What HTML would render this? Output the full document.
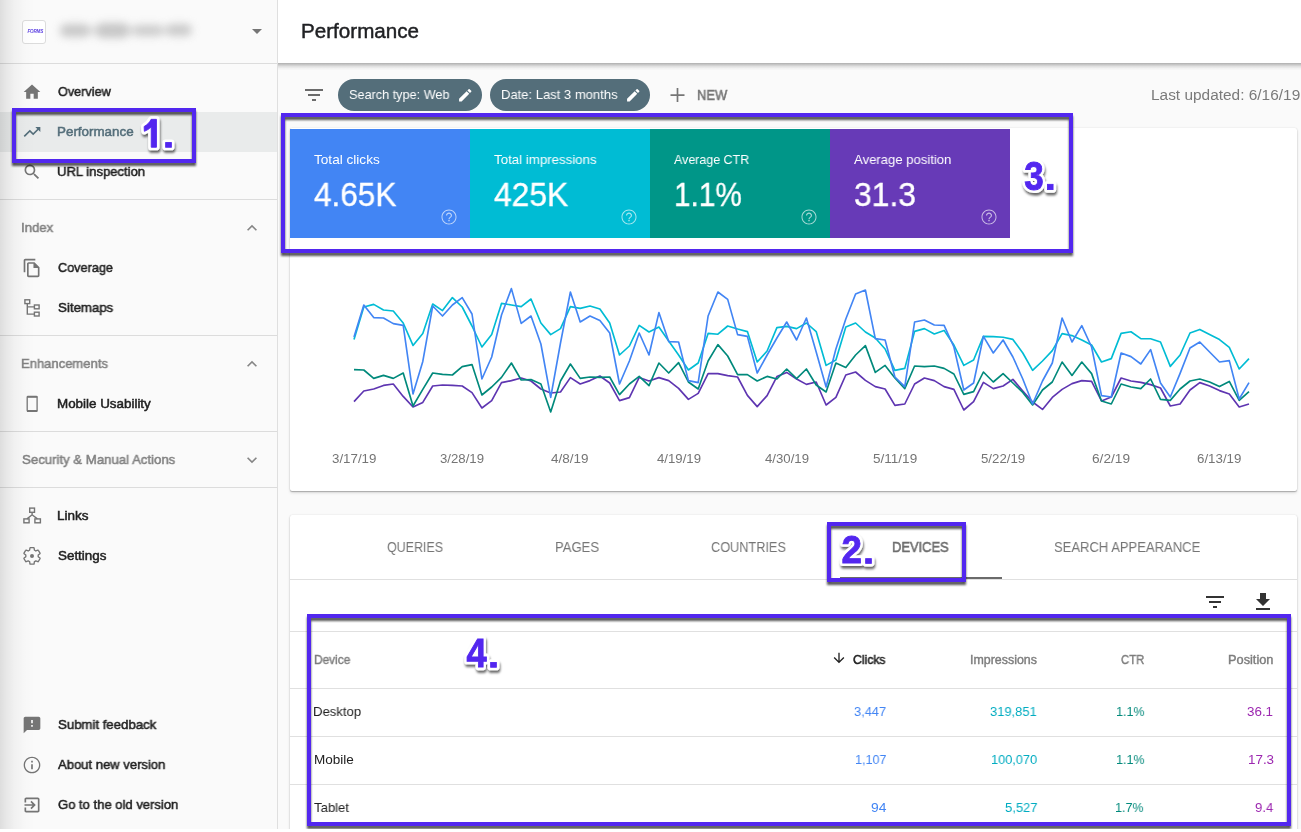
<!DOCTYPE html>
<html lang="en">
<head>
<meta charset="utf-8">
<title>Performance</title>
<style>
*{box-sizing:border-box;margin:0;padding:0}
html,body{width:1301px;height:832px;overflow:hidden;background:#fff}
body{font-family:"Liberation Sans",sans-serif;color:#212121;position:relative}
.abs{position:absolute}
#app{position:absolute;left:0;top:0;width:1301px;height:829px;background:#fafafa;overflow:hidden}
/* ---------- sidebar ---------- */
#side{position:absolute;left:0;top:0;width:278px;height:829px;background:#fafafa;border-right:1px solid #dfdfdf}
#side .edge{position:absolute;left:0;top:0;width:36px;height:829px;background:linear-gradient(to right,rgba(0,0,0,.115) 0,rgba(0,0,0,.07) 7px,rgba(0,0,0,.035) 15px,rgba(0,0,0,.012) 25px,rgba(0,0,0,0) 35px)}
.hr{position:absolute;left:0;width:277px;height:1px;background:#dcdcdc}
.nav{position:absolute;left:0;width:277px;height:40px}
.nav.sel{background:#e9ebeb}
.nav svg{position:absolute;left:22px;top:10px;width:20px;height:20px;fill:#757575}
.nav.sel svg{fill:#546e7a}
.chev{position:absolute;left:242px;width:20px;height:20px;fill:#858585}
/* ---------- header ---------- */
#head{position:absolute;left:278px;top:0;width:1023px;height:63px;background:#fff}
#head:after{content:"";position:absolute;left:0;top:63px;width:1023px;height:8px;background:linear-gradient(to bottom,rgba(0,0,0,.30) 0,rgba(0,0,0,.21) 1.5px,rgba(0,0,0,.10) 3.5px,rgba(0,0,0,.03) 5.5px,rgba(0,0,0,0) 7.5px)}
/* ---------- filter bar ---------- */
.chip{position:absolute;top:79px;height:32px;border-radius:16px;background:#546e7a;color:#fff;font-size:13px;line-height:32px;white-space:nowrap}
.chip svg{position:absolute;top:8px;width:16px;height:16px;fill:#fff}
/* ---------- cards ---------- */
.card{position:absolute;left:290px;width:1007px;background:#fff;border-radius:2px;box-shadow:0 1px 1px rgba(0,0,0,.22),0 2px 3px rgba(0,0,0,.12),0 0 1.5px rgba(0,0,0,.15)}
.tile{position:absolute;top:1px;width:180px;height:109px;color:#fff}
.tile svg{position:absolute;left:150px;top:79px;width:18px;height:18px;fill:rgba(255,255,255,.66)}
.t{position:absolute;will-change:transform;line-height:0;white-space:nowrap;transform-origin:0 0;color:#212121}
.line{position:absolute;left:290px;width:1007px;height:1px;background:#e0e0e0}
/* ---------- annotations ---------- */
.box{position:absolute;border:4px solid #5227ef;filter:drop-shadow(.6px 3px .9px rgba(0,0,0,.66))}
.num{position:absolute;overflow:visible}
.num text{font-family:"Liberation Sans",sans-serif;font-weight:bold;font-size:40px}
</style>
</head>
<body>
<div id="app">

<!-- ================= SIDEBAR ================= -->
<div id="side">
  <div class="abs" style="left:22px;top:20px;width:24px;height:24px;border:1px solid #dcdcdc;border-radius:3px;background:#fff"></div>
  <div class="abs" style="left:27.500px;top:29px;width:14px;height:6px;line-height:6px;font-size:4.600px;font-weight:bold;font-style:italic;color:#6146e3;letter-spacing:-.2px;white-space:nowrap;filter:blur(.3px)">FORMS</div>
  <div class="abs" style="left:46px;top:10px;width:160px;height:42px;filter:blur(4.500px);opacity:.8">
    <div class="abs" style="left:14px;top:14px;width:30px;height:13px;background:#bcbcbc;border-radius:6px"></div>
    <div class="abs" style="left:44px;top:17px;width:8px;height:7px;background:#d8d8d8"></div>
    <div class="abs" style="left:50px;top:13px;width:33px;height:15px;background:#bababa;border-radius:6px"></div>
    <div class="abs" style="left:83px;top:17px;width:6px;height:7px;background:#d6d6d6"></div>
    <div class="abs" style="left:87px;top:15px;width:30px;height:11px;background:#c0c0c0;border-radius:5px"></div>
    <div class="abs" style="left:117px;top:17px;width:5px;height:7px;background:#d8d8d8"></div>
    <div class="abs" style="left:120px;top:14px;width:26px;height:12px;background:#bebebe;border-radius:6px"></div>
  </div>
  <svg class="abs" style="left:252px;top:29px;width:10px;height:5px" viewBox="0 0 10 5"><path d="M0 0h10L5 5z" fill="#757575"/></svg>
  <div class="hr" style="top:63px"></div>

  <div class="nav" style="top:72px"><svg viewBox="0 0 24 24"><path d="M10 20v-6h4v6h5v-8h3L12 3 2 12h3v8z"/></svg></div>
  <div class="nav sel" style="top:112px"><svg viewBox="0 0 24 24"><path d="M16 6l2.290 2.290-4.880 4.880-4-4L2 16.590 3.410 18l6-6 4 4 6.300-6.290L22 12V6z"/></svg></div>
  <div class="nav" style="top:152px"><svg viewBox="0 0 24 24"><path d="M15.500 14h-.79l-.28-.27A6.470 6.470 0 0 0 16 9.500 6.500 6.500 0 1 0 9.500 16c1.610 0 3.090-.59 4.230-1.570l.27.28v.79l5 4.990L20.490 19l-4.990-5zm-6 0C7.010 14 5 11.990 5 9.500S7.010 5 9.500 5 14 7.010 14 9.500 11.990 14 9.500 14z"/></svg></div>
  <div class="hr" style="top:199px"></div>

  <svg class="chev" style="top:218px" viewBox="0 0 24 24"><path d="M7.410 15.410L12 10.830l4.590 4.580L18 14l-6-6-6 6z"/></svg>
  <div class="nav" style="top:248px"><svg viewBox="0 0 24 24"><path d="M16 1H4c-1.100 0-2 .9-2 2v14h2V3h12V1zm-1 4H8c-1.100 0-1.990.9-1.990 2L6 21c0 1.100.89 2 1.990 2H19c1.100 0 2-.9 2-2V11l-6-6zM8 21V7h6v5h5v9H8z"/><path d="M14 6.500l5.500 5.500H14z"/></svg></div>
  <div class="hr" style="top:335px"></div>

  <svg class="chev" style="top:354px" viewBox="0 0 24 24"><path d="M7.410 15.410L12 10.830l4.590 4.580L18 14l-6-6-6 6z"/></svg>
  <div class="hr" style="top:431px"></div>

  <svg class="chev" style="top:450px" viewBox="0 0 24 24"><path d="M7.410 8.590L12 13.170l4.590-4.580L18 10l-6 6-6-6z"/></svg>
  <div class="hr" style="top:487px"></div>

  <div class="nav" style="top:705px"><svg viewBox="0 0 24 24"><path d="M20 2H4c-1.100 0-1.990.9-1.990 2L2 22l4-4h14c1.100 0 2-.9 2-2V4c0-1.100-.9-2-2-2zm-7 12h-2v-2h2v2zm0-4h-2V6h2v4z"/></svg></div>
  <div class="nav" style="top:745px"><svg viewBox="0 0 24 24"><path d="M11 17h2v-6h-2v6zm1-15C6.480 2 2 6.480 2 12s4.480 10 10 10 10-4.480 10-10S17.520 2 12 2zm0 18.400c-4.630 0-8.400-3.770-8.400-8.400S7.370 3.600 12 3.600s8.400 3.770 8.400 8.400-3.770 8.400-8.400 8.400zM11 9h2V7h-2v2z"/></svg></div>
  <div class="nav" style="top:785px"><svg viewBox="0 0 24 24"><path d="M10.090 15.590L11.500 17l5-5-5-5-1.410 1.410L12.670 11H3v2h9.670l-2.580 2.590zM19 3H5c-1.110 0-2 .9-2 2v4h2V5h14v14H5v-4H3v4c0 1.100.89 2 2 2h14c1.100 0 2-.9 2-2V5c0-1.100-.9-2-2-2z"/></svg></div>

  <!-- custom outlined icons (page pixel coordinates) -->
  <svg class="abs" style="left:0;top:0;width:60px;height:829px" viewBox="0 0 60 829" fill="none" stroke="#757575" stroke-width="1.400">
    <!-- sitemaps -->
    <rect x="24.900" y="299.800" width="4.800" height="3.800"/>
    <rect x="34.400" y="305" width="4.700" height="3.800"/>
    <rect x="34.400" y="312.200" width="4.700" height="3.800"/>
    <path d="M27.300 303.600V314.100H34.400M27.300 306.900H34.400"/>
    <!-- mobile -->
    <rect x="27.200" y="396.500" width="9.900" height="14.800" rx=".8" stroke-width="1.300"/>
    <path d="M27 396.900H37.300M27 411H37.300" stroke-width="1.900"/>
    <!-- links -->
    <rect x="29.700" y="508.100" width="4.800" height="4.200"/>
    <rect x="23.900" y="518.900" width="5.200" height="3.900"/>
    <rect x="34.900" y="518.900" width="5.500" height="3.900"/>
    <path d="M32.100 512.300V515.200M27 518.900L32.100 514.800L37.400 518.900"/>
    <!-- settings gear -->
    <g transform="translate(22.050,545.950) scale(.83)"><path stroke-width="1.600" stroke-linejoin="round" d="M19.430 12.980c.04-.32.07-.64.07-.98s-.03-.66-.07-.98l2.110-1.650c.19-.15.24-.42.12-.64l-2-3.460c-.12-.22-.39-.3-.61-.22l-2.490 1c-.52-.4-1.080-.73-1.690-.98l-.38-2.650C14.460 2.180 14.250 2 14 2h-4c-.25 0-.46.18-.49.42l-.38 2.650c-.61.25-1.170.59-1.690.98l-2.490-1c-.23-.09-.49 0-.61.220l-2 3.460c-.13.220-.07.490.12.640l2.110 1.650c-.04.320-.07.650-.07.980s.03.660.07.980l-2.110 1.650c-.19.150-.24.420-.12.640l2 3.460c.12.220.39.300.61.220l2.490-1c.52.400 1.080.73 1.690.98l.38 2.650c.03.240.24.420.49.420h4c.25 0 .46-.18.490-.42l.38-2.650c.61-.25 1.170-.59 1.690-.98l2.490 1c.23.090.49 0 .61-.22l2-3.460c.12-.22.070-.49-.12-.64l-2.110-1.650z"/><circle cx="12" cy="12" r="2.400" fill="#757575" stroke="none"/></g>
  </svg>
  <div class="edge"></div>
</div>
<span class="t" style="left:58px;top:92px;font-size:13.4px;-webkit-text-stroke:.5px;transform:scaleX(0.9440)">Overview</span>
<span class="t" style="left:57px;top:132px;font-size:13.4px;-webkit-text-stroke:.5px;color:#546e7a;transform:scaleX(0.9956)">Performance</span>
<span class="t" style="left:57px;top:172px;font-size:13.4px;-webkit-text-stroke:.5px;transform:scaleX(0.9751)">URL inspection</span>
<span class="t" style="left:21px;top:228px;font-size:13.4px;-webkit-text-stroke:.5px;color:#808080;transform:scaleX(0.9832)">Index</span>
<span class="t" style="left:58px;top:268px;font-size:13.4px;-webkit-text-stroke:.5px;transform:scaleX(0.9471)">Coverage</span>
<span class="t" style="left:58px;top:308px;font-size:13.4px;-webkit-text-stroke:.5px;transform:scaleX(0.9894)">Sitemaps</span>
<span class="t" style="left:21px;top:364px;font-size:13.4px;-webkit-text-stroke:.5px;color:#808080;transform:scaleX(0.9725)">Enhancements</span>
<span class="t" style="left:57px;top:404px;font-size:13.4px;-webkit-text-stroke:.5px;transform:scaleX(0.9968)">Mobile Usability</span>
<span class="t" style="left:22px;top:460px;font-size:13.4px;-webkit-text-stroke:.5px;color:#808080;transform:scaleX(0.9854)">Security &amp; Manual Actions</span>
<span class="t" style="left:57px;top:516px;font-size:13.4px;-webkit-text-stroke:.5px;transform:scaleX(1.0089)">Links</span>
<span class="t" style="left:58px;top:556px;font-size:13.4px;-webkit-text-stroke:.5px;transform:scaleX(1.0009)">Settings</span>
<span class="t" style="left:58px;top:725px;font-size:13.4px;-webkit-text-stroke:.5px;transform:scaleX(0.9850)">Submit feedback</span>
<span class="t" style="left:58px;top:765px;font-size:13.4px;-webkit-text-stroke:.5px;transform:scaleX(0.9742)">About new version</span>
<span class="t" style="left:58px;top:805px;font-size:13.4px;-webkit-text-stroke:.5px;transform:scaleX(0.9736)">Go to the old version</span>

<!-- ================= HEADER ================= -->
<div id="head"></div>
<span class="t" style="left:301px;top:31px;font-size:20.5px;-webkit-text-stroke:.45px;color:#202124;transform:scaleX(1.0060)">Performance</span>

<!-- ================= FILTER BAR ================= -->
<svg class="abs" style="left:302px;top:83px;width:24px;height:24px" viewBox="0 0 24 24"><path d="M10 18h4v-2h-4v2zM3 6v2h18V6H3zm3 7h12v-2H6v2z" fill="#6b6b6b"/></svg>
<div class="chip" style="left:338px;width:144px"><svg style="left:118.900px;top:7.800px;width:16.500px;height:16.500px" viewBox="0 0 24 24"><path d="M3 17.250V21h3.750L17.810 9.940l-3.750-3.750L3 17.250zM20.710 7.040c.39-.39.39-1.020 0-1.410l-2.340-2.340c-.39-.39-1.020-.39-1.410 0l-1.830 1.830 3.750 3.750 1.830-1.830z"/></svg></div>
<div class="chip" style="left:490px;width:160px"><svg style="left:134.800px;top:7.900px;width:16.500px;height:16.500px" viewBox="0 0 24 24"><path d="M3 17.250V21h3.750L17.810 9.940l-3.750-3.750L3 17.250zM20.710 7.040c.39-.39.39-1.020 0-1.410l-2.340-2.340c-.39-.39-1.020-.39-1.410 0l-1.830 1.830 3.750 3.750 1.830-1.830z"/></svg></div>
<span class="t" style="left:349px;top:95px;font-size:13.4px;color:#fff;transform:scaleX(0.9464)">Search type: Web</span>
<span class="t" style="left:501px;top:95px;font-size:13.4px;color:#fff;transform:scaleX(0.9724)">Date: Last 3 months</span>
<svg class="abs" style="left:668px;top:86px;width:20px;height:20px" viewBox="0 0 20 20"><path d="M2.500 9.100H16.500M9.500 2V16" stroke="#757575" stroke-width="1.700" fill="none"/></svg>
<span class="t" style="left:697px;top:95px;font-size:13.9px;-webkit-text-stroke:.5px;color:#757575;transform:scaleX(0.9338)">NEW</span>
<span class="t" style="left:1151px;top:95px;font-size:14.7px;color:#7a7a7a;transform:scaleX(1.0501)">Last updated: 6/16/19</span>

<!-- ================= CHART CARD ================= -->
<div class="card" style="top:128px;height:363px">
  <div class="tile" style="left:0;background:#4285f4"><svg viewBox="0 0 24 24"><path d="M11.100 17.800h1.800v-1.800h-1.800v1.800zM12 2C6.480 2 2 6.480 2 12s4.480 10 10 10 10-4.480 10-10S17.520 2 12 2zm0 18.700c-4.800 0-8.700-3.900-8.700-8.700S7.200 3.300 12 3.300s8.700 3.900 8.700 8.700-3.900 8.700-8.700 8.700zm0-14.700c-2.210 0-4 1.790-4 4h1.500c0-1.380 1.120-2.500 2.500-2.500s2.500 1.120 2.500 2.500c0 2-3.250 2.250-3.250 5h1.500c0-2.250 3.250-2.500 3.250-5 0-2.210-1.790-4-4-4z"/></svg></div>
  <div class="tile" style="left:180px;background:#00bcd4"><svg viewBox="0 0 24 24"><path d="M11.100 17.800h1.800v-1.800h-1.800v1.800zM12 2C6.480 2 2 6.480 2 12s4.480 10 10 10 10-4.480 10-10S17.520 2 12 2zm0 18.700c-4.800 0-8.700-3.900-8.700-8.700S7.200 3.300 12 3.300s8.700 3.900 8.700 8.700-3.900 8.700-8.700 8.700zm0-14.700c-2.210 0-4 1.790-4 4h1.500c0-1.380 1.120-2.500 2.500-2.500s2.500 1.120 2.500 2.500c0 2-3.250 2.250-3.250 5h1.500c0-2.250 3.250-2.500 3.250-5 0-2.210-1.790-4-4-4z"/></svg></div>
  <div class="tile" style="left:360px;background:#009688"><svg viewBox="0 0 24 24"><path d="M11.100 17.800h1.800v-1.800h-1.800v1.800zM12 2C6.480 2 2 6.480 2 12s4.480 10 10 10 10-4.480 10-10S17.520 2 12 2zm0 18.700c-4.800 0-8.700-3.900-8.700-8.700S7.200 3.300 12 3.300s8.700 3.900 8.700 8.700-3.900 8.700-8.700 8.700zm0-14.700c-2.210 0-4 1.790-4 4h1.500c0-1.380 1.120-2.500 2.500-2.500s2.500 1.120 2.500 2.500c0 2-3.250 2.250-3.250 5h1.500c0-2.250 3.250-2.500 3.250-5 0-2.210-1.790-4-4-4z"/></svg></div>
  <div class="tile" style="left:540px;background:#673ab7"><svg viewBox="0 0 24 24"><path d="M11.100 17.800h1.800v-1.800h-1.800v1.800zM12 2C6.480 2 2 6.480 2 12s4.480 10 10 10 10-4.480 10-10S17.520 2 12 2zm0 18.700c-4.800 0-8.700-3.900-8.700-8.700S7.200 3.300 12 3.300s8.700 3.900 8.700 8.700-3.900 8.700-8.700 8.700zm0-14.700c-2.210 0-4 1.790-4 4h1.500c0-1.380 1.120-2.500 2.500-2.500s2.500 1.120 2.500 2.500c0 2-3.250 2.250-3.250 5h1.500c0-2.250 3.250-2.500 3.250-5 0-2.210-1.790-4-4-4z"/></svg></div>
</div>
<span class="t" style="left:314px;top:160px;font-size:13.4px;color:#fff;transform:scaleX(1.0155)">Total clicks</span>
<span class="t" style="left:494px;top:160px;font-size:13.4px;color:#fff;transform:scaleX(0.9923)">Total impressions</span>
<span class="t" style="left:674px;top:160px;font-size:13.4px;color:#fff;transform:scaleX(0.9298)">Average CTR</span>
<span class="t" style="left:854px;top:160px;font-size:13.4px;color:#fff;transform:scaleX(0.9790)">Average position</span>
<span class="t" style="left:314px;top:195px;font-size:33px;-webkit-text-stroke:.35px;color:#fff;transform:scaleX(0.9557)">4.65K</span>
<span class="t" style="left:494px;top:195px;font-size:33px;-webkit-text-stroke:.35px;color:#fff;transform:scaleX(0.9634)">425K</span>
<span class="t" style="left:674px;top:195px;font-size:33px;-webkit-text-stroke:.35px;color:#fff;transform:scaleX(0.9031)">1.1%</span>
<span class="t" style="left:854px;top:195px;font-size:33px;-webkit-text-stroke:.35px;color:#fff;transform:scaleX(0.9668)">31.3</span>

<svg class="abs" style="left:0;top:0;width:1301px;height:500px;pointer-events:none" viewBox="0 0 1301 500" fill="none" stroke-width="1.650" stroke-linejoin="round" stroke-linecap="butt">
  <polyline stroke="#5e35b1" points="354.0,401.6 363.8,391.0 373.7,389.0 383.5,385.4 393.3,384.0 403.2,396.4 413.0,407.0 422.8,402.4 432.7,386.0 442.5,385.0 452.4,385.4 462.2,386.0 472.0,392.6 481.9,408.0 491.7,400.6 501.5,382.6 511.4,380.6 521.2,378.0 531.0,381.0 540.9,389.0 550.7,393.0 560.5,392.0 570.4,377.6 580.2,384.0 590.0,380.6 599.9,376.0 609.7,383.0 619.5,400.6 629.4,397.6 639.2,377.4 649.0,381.0 658.9,377.6 668.7,380.6 678.6,388.4 688.4,399.4 698.2,393.4 708.1,373.6 717.9,373.6 727.7,375.6 737.6,377.0 747.4,395.4 757.2,406.6 767.1,395.6 776.9,376.6 786.7,372.4 796.6,379.0 806.4,384.4 816.2,382.0 826.1,405.0 835.9,397.4 845.8,375.0 855.6,372.0 865.4,380.4 875.3,386.6 885.1,389.0 894.9,405.4 904.8,404.0 914.6,384.0 924.4,378.0 934.3,380.6 944.1,386.6 953.9,389.4 963.8,410.0 973.6,401.6 983.4,382.4 993.3,388.6 1003.1,386.0 1012.9,379.4 1022.8,391.0 1032.6,402.0 1042.5,409.4 1052.3,397.4 1062.1,389.4 1072.0,383.6 1081.8,380.6 1091.6,381.4 1101.5,401.0 1111.3,397.0 1121.1,378.0 1131.0,381.0 1140.8,382.4 1150.6,384.6 1160.5,388.0 1170.3,406.0 1180.1,404.0 1190.0,390.0 1199.8,382.6 1209.6,386.0 1219.5,390.6 1229.3,394.0 1239.2,407.0 1249.0,404.0"/>
  <polyline stroke="#00897b" points="354.0,369.6 363.8,370.0 373.7,378.4 383.5,375.4 393.3,378.4 403.2,373.0 413.0,406.0 422.8,389.4 432.7,373.0 442.5,374.4 452.4,375.0 462.2,366.6 472.0,364.6 481.9,395.0 491.7,387.0 501.5,377.4 511.4,363.0 521.2,380.0 531.0,379.6 540.9,384.0 550.7,412.0 560.5,381.0 570.4,364.0 580.2,378.4 590.0,377.0 599.9,377.4 609.7,377.0 619.5,394.6 629.4,384.0 639.2,376.4 649.0,385.6 658.9,363.0 668.7,373.0 678.6,362.6 688.4,382.0 698.2,389.0 708.1,361.0 717.9,344.6 727.7,356.0 737.6,374.6 747.4,374.6 757.2,381.0 767.1,376.4 776.9,379.0 786.7,369.0 796.6,378.6 806.4,369.0 816.2,385.0 826.1,392.0 835.9,363.0 845.8,367.4 855.6,355.0 865.4,345.6 875.3,372.4 885.1,365.4 894.9,378.0 904.8,388.6 914.6,366.0 924.4,366.6 934.3,366.0 944.1,368.4 953.9,374.0 963.8,394.4 973.6,391.6 983.4,372.0 993.3,382.0 1003.1,373.6 1012.9,383.0 1022.8,392.4 1032.6,405.0 1042.5,390.0 1052.3,382.0 1062.1,362.0 1072.0,375.4 1081.8,362.0 1091.6,373.6 1101.5,401.0 1111.3,404.0 1121.1,384.0 1131.0,387.0 1140.8,388.6 1150.6,379.0 1160.5,399.4 1170.3,400.4 1180.1,389.0 1190.0,381.0 1199.8,379.0 1209.6,382.0 1219.5,386.6 1229.3,381.4 1239.2,400.4 1249.0,391.6"/>
  <polyline stroke="#00bcd4" points="354.0,339.4 363.8,307.0 373.7,304.4 383.5,310.0 393.3,311.0 403.2,323.0 413.0,345.4 422.8,333.4 432.7,304.0 442.5,310.6 452.4,297.6 462.2,307.0 472.0,326.0 481.9,347.0 491.7,334.6 501.5,303.4 511.4,305.0 521.2,306.6 531.0,299.0 540.9,323.0 550.7,334.6 560.5,328.6 570.4,306.6 580.2,308.4 590.0,306.0 599.9,309.0 609.7,323.0 619.5,355.0 629.4,346.0 639.2,325.4 649.0,332.0 658.9,327.0 668.7,341.0 678.6,355.0 688.4,370.0 698.2,363.0 708.1,333.4 717.9,334.2 727.7,326.0 737.6,329.0 747.4,331.6 757.2,362.0 767.1,351.0 776.9,327.6 786.7,326.4 796.6,328.6 806.4,323.0 816.2,331.6 826.1,365.4 835.9,360.0 845.8,327.0 855.6,323.0 865.4,332.0 875.3,338.0 885.1,349.0 894.9,370.4 904.8,368.4 914.6,331.4 924.4,328.6 934.3,334.0 944.1,330.4 953.9,345.0 963.8,365.4 973.6,360.0 983.4,336.4 993.3,336.6 1003.1,337.2 1012.9,339.4 1022.8,353.0 1032.6,370.4 1042.5,361.0 1052.3,350.6 1062.1,333.6 1072.0,335.6 1081.8,340.0 1091.6,345.0 1101.5,362.0 1111.3,358.6 1121.1,333.4 1131.0,331.8 1140.8,338.6 1150.6,338.8 1160.5,342.0 1170.3,366.4 1180.1,355.0 1190.0,333.0 1199.8,329.4 1209.6,334.6 1219.5,339.6 1229.3,347.4 1239.2,369.0 1249.0,358.6"/>
  <polyline stroke="#4285f4" points="354.0,337.0 363.8,305.0 373.7,317.6 383.5,318.0 393.3,323.6 403.2,325.4 413.0,394.0 422.8,361.4 432.7,306.0 442.5,316.0 452.4,305.0 462.2,297.6 472.0,314.0 481.9,379.0 491.7,357.0 501.5,315.0 511.4,288.6 521.2,323.4 531.0,316.0 540.9,344.0 550.7,397.4 560.5,343.0 570.4,292.0 580.2,322.0 590.0,316.0 599.9,320.6 609.7,333.0 619.5,384.0 629.4,361.0 639.2,333.0 649.0,355.0 658.9,312.6 668.7,341.6 678.6,342.0 688.4,380.6 698.2,382.6 708.1,316.0 717.9,292.0 727.7,299.4 737.6,334.6 747.4,336.4 757.2,373.0 767.1,355.0 776.9,338.0 786.7,322.0 796.6,340.0 806.4,318.0 816.2,352.0 826.1,387.0 835.9,349.0 845.8,319.0 855.6,294.0 865.4,290.0 875.3,338.6 885.1,340.0 894.9,377.0 904.8,386.6 914.6,322.0 924.4,320.0 934.3,325.0 944.1,325.4 953.9,347.0 963.8,390.0 973.6,383.0 983.4,336.4 993.3,353.0 1003.1,340.0 1012.9,357.0 1022.8,379.0 1032.6,404.0 1042.5,381.0 1052.3,363.0 1062.1,318.0 1072.0,342.0 1081.8,325.6 1091.6,347.0 1101.5,395.6 1111.3,397.0 1121.1,353.0 1131.0,356.6 1140.8,364.0 1150.6,349.6 1160.5,383.0 1170.3,397.0 1180.1,373.4 1190.0,348.0 1199.8,342.0 1209.6,352.0 1219.5,362.0 1229.3,360.6 1239.2,399.0 1249.0,382.6"/>
</svg>
<span class="t" style="left:332px;top:459px;font-size:12.6px;color:#757575;transform:scaleX(1.0573)">3/17/19</span>
<span class="t" style="left:440px;top:459px;font-size:12.6px;color:#757575;transform:scaleX(1.0478)">3/28/19</span>
<span class="t" style="left:551px;top:459px;font-size:12.6px;color:#757575;transform:scaleX(1.0690)">4/8/19</span>
<span class="t" style="left:657px;top:459px;font-size:12.6px;color:#757575;transform:scaleX(1.0467)">4/19/19</span>
<span class="t" style="left:765px;top:459px;font-size:12.6px;color:#757575;transform:scaleX(1.0467)">4/30/19</span>
<span class="t" style="left:873px;top:459px;font-size:12.6px;color:#757575;transform:scaleX(1.0753)">5/11/19</span>
<span class="t" style="left:981px;top:459px;font-size:12.6px;color:#757575;transform:scaleX(1.0506)">5/22/19</span>
<span class="t" style="left:1092px;top:459px;font-size:12.6px;color:#757575;transform:scaleX(1.0858)">6/2/19</span>
<span class="t" style="left:1197px;top:459px;font-size:12.6px;color:#757575;transform:scaleX(1.0558)">6/13/19</span>

<!-- ================= TABLE CARD ================= -->
<div class="card" style="top:515px;height:330px"></div>
<span class="t" style="left:387px;top:547px;font-size:14.4px;color:#757575;transform:scaleX(0.8654)">QUERIES</span>
<span class="t" style="left:555px;top:547px;font-size:14.4px;color:#757575;transform:scaleX(0.9075)">PAGES</span>
<span class="t" style="left:711px;top:547px;font-size:14.4px;color:#757575;transform:scaleX(0.8840)">COUNTRIES</span>
<span class="t" style="left:892px;top:547px;font-size:14.4px;-webkit-text-stroke:.6px;color:#6e6e6e;transform:scaleX(0.8976)">DEVICES</span>
<span class="t" style="left:1054px;top:547px;font-size:14.4px;color:#757575;transform:scaleX(0.9053)">SEARCH APPEARANCE</span>
<div class="line" style="top:579px"></div>
<div class="abs" style="left:840px;top:577px;width:162px;height:2px;background:#6b6b6b"></div>
<svg class="abs" style="left:1203px;top:590px;width:24px;height:24px" viewBox="0 0 24 24"><path d="M10 18h4v-2h-4v2zM3 6v2h18V6H3zm3 7h12v-2H6v2z" fill="#333"/></svg>
<svg class="abs" style="left:1251px;top:590px;width:24px;height:24px" viewBox="0 0 24 24"><path d="M19 9h-4V3H9v6H5l7 7 7-7zM5 18v2h14v-2H5z" fill="#333"/></svg>
<div class="line" style="top:631px"></div>
<div class="line" style="top:688px"></div>
<div class="line" style="top:736px"></div>
<div class="line" style="top:784px"></div>

<span class="t" style="left:314px;top:660px;font-size:12.4px;-webkit-text-stroke:.4px;color:#7d7d7d;transform:scaleX(0.9590)">Device</span>
<svg class="abs" style="left:831px;top:650px;width:16px;height:16px" viewBox="0 0 24 24"><path d="M20 12l-1.410-1.410L13 16.170V4h-2v12.170l-5.580-5.590L4 12l8 8 8-8z" fill="#212121"/></svg>
<span class="t" style="left:853px;top:660px;font-size:12.4px;-webkit-text-stroke:.5px;color:#212121;transform:scaleX(0.9820)">Clicks</span>
<span class="t" style="left:970px;top:660px;font-size:12.4px;-webkit-text-stroke:.4px;color:#7d7d7d;transform:scaleX(1.0016)">Impressions</span>
<span class="t" style="left:1121px;top:660px;font-size:12.4px;-webkit-text-stroke:.4px;color:#7d7d7d;transform:scaleX(0.9153)">CTR</span>
<span class="t" style="left:1228px;top:660px;font-size:12.4px;-webkit-text-stroke:.4px;color:#7d7d7d;transform:scaleX(1.0315)">Position</span>

<span class="t" style="left:313px;top:712px;font-size:13.4px;color:#212121;transform:scaleX(0.9795)">Desktop</span>
<span class="t" style="left:854px;top:712px;font-size:13.4px;color:#4285f4;transform:scaleX(0.9597)">3,447</span>
<span class="t" style="left:990px;top:712px;font-size:13.4px;color:#00acc1;transform:scaleX(0.9649)">319,851</span>
<span class="t" style="left:1116px;top:712px;font-size:13.4px;color:#00897b;transform:scaleX(0.9372)">1.1%</span>
<span class="t" style="left:1247px;top:712px;font-size:13.4px;color:#9c27b0;transform:scaleX(0.9996)">36.1</span>

<span class="t" style="left:314px;top:760px;font-size:13.4px;color:#212121;transform:scaleX(1.0096)">Mobile</span>
<span class="t" style="left:855px;top:760px;font-size:13.4px;color:#4285f4;transform:scaleX(0.9401)">1,107</span>
<span class="t" style="left:991px;top:760px;font-size:13.4px;color:#00acc1;transform:scaleX(0.9518)">100,070</span>
<span class="t" style="left:1116px;top:760px;font-size:13.4px;color:#00897b;transform:scaleX(0.9372)">1.1%</span>
<span class="t" style="left:1248px;top:760px;font-size:13.4px;color:#9c27b0;transform:scaleX(0.9851)">17.3</span>

<span class="t" style="left:314px;top:808px;font-size:13.4px;color:#212121;transform:scaleX(0.9792)">Tablet</span>
<span class="t" style="left:871px;top:808px;font-size:13.4px;color:#4285f4;transform:scaleX(1.0337)">94</span>
<span class="t" style="left:1005px;top:808px;font-size:13.4px;color:#00acc1;transform:scaleX(0.9724)">5,527</span>
<span class="t" style="left:1115px;top:808px;font-size:13.4px;color:#00897b;transform:scaleX(0.9372)">1.7%</span>
<span class="t" style="left:1255px;top:808px;font-size:13.4px;color:#9c27b0;transform:scaleX(0.9746)">9.4</span>

<!-- ================= ANNOTATIONS ================= -->
<div class="box" style="left:12px;top:108px;width:184px;height:55px"></div>
<div class="box" style="left:281px;top:113px;width:792px;height:140px"></div>
<div class="box" style="left:827px;top:522px;width:139px;height:60px"></div>
<div class="box" style="left:307px;top:614px;width:984px;height:212px"></div>

<svg class="num" style="left:0;top:0;width:1301px;height:832px" viewBox="0 0 1301 832">
  <defs>
    <filter id="ds" x="-20%" y="-20%" width="150%" height="150%"><feDropShadow dx=".8" dy="2.600" stdDeviation=".85" flood-color="#000" flood-opacity=".6"/></filter>
  </defs>
  <g filter="url(#ds)">
    <g fill="#fff" stroke="#fff" stroke-width="6.200" stroke-linejoin="round">
      <path d="M151.100 119.350H156.450V147.250H151.250V127C149 129 146.900 130.300 144.350 131.300L144.150 126.500C147.100 125 149.600 122.500 151.100 119.350Z"/>
      <rect x="165.650" y="142.550" width="5.700" height="4.700"/>
      <text transform="translate(841.450,563.350) scale(.918,.968)">2</text>
      <rect x="865.650" y="558.650" width="5.700" height="4.700"/>
      <text transform="translate(1024.350,189.550) scale(.875,1.0035)">3</text>
      <rect x="1047.450" y="184.350" width="5.600" height="5.200"/>
      <text transform="translate(466.430,667.250) scale(.906,1.011)">4</text>
      <rect x="490.650" y="662.550" width="5.700" height="4.700"/>
    </g>
    <g fill="#5227ef" stroke="#5227ef" stroke-width=".9" stroke-linejoin="miter">
      <path d="M151.100 119.350H156.450V147.250H151.250V127C149 129 146.900 130.300 144.350 131.300L144.150 126.500C147.100 125 149.600 122.500 151.100 119.350Z"/>
      <rect x="165.650" y="142.550" width="5.700" height="4.700"/>
      <text transform="translate(841.450,563.350) scale(.918,.968)">2</text>
      <rect x="865.650" y="558.650" width="5.700" height="4.700"/>
      <text transform="translate(1024.350,189.550) scale(.875,1.0035)">3</text>
      <rect x="1047.450" y="184.350" width="5.600" height="5.200"/>
      <text transform="translate(466.430,667.250) scale(.906,1.011)">4</text>
      <rect x="490.650" y="662.550" width="5.700" height="4.700"/>
    </g>
  </g>
</svg>

</div>
</body>
</html>
